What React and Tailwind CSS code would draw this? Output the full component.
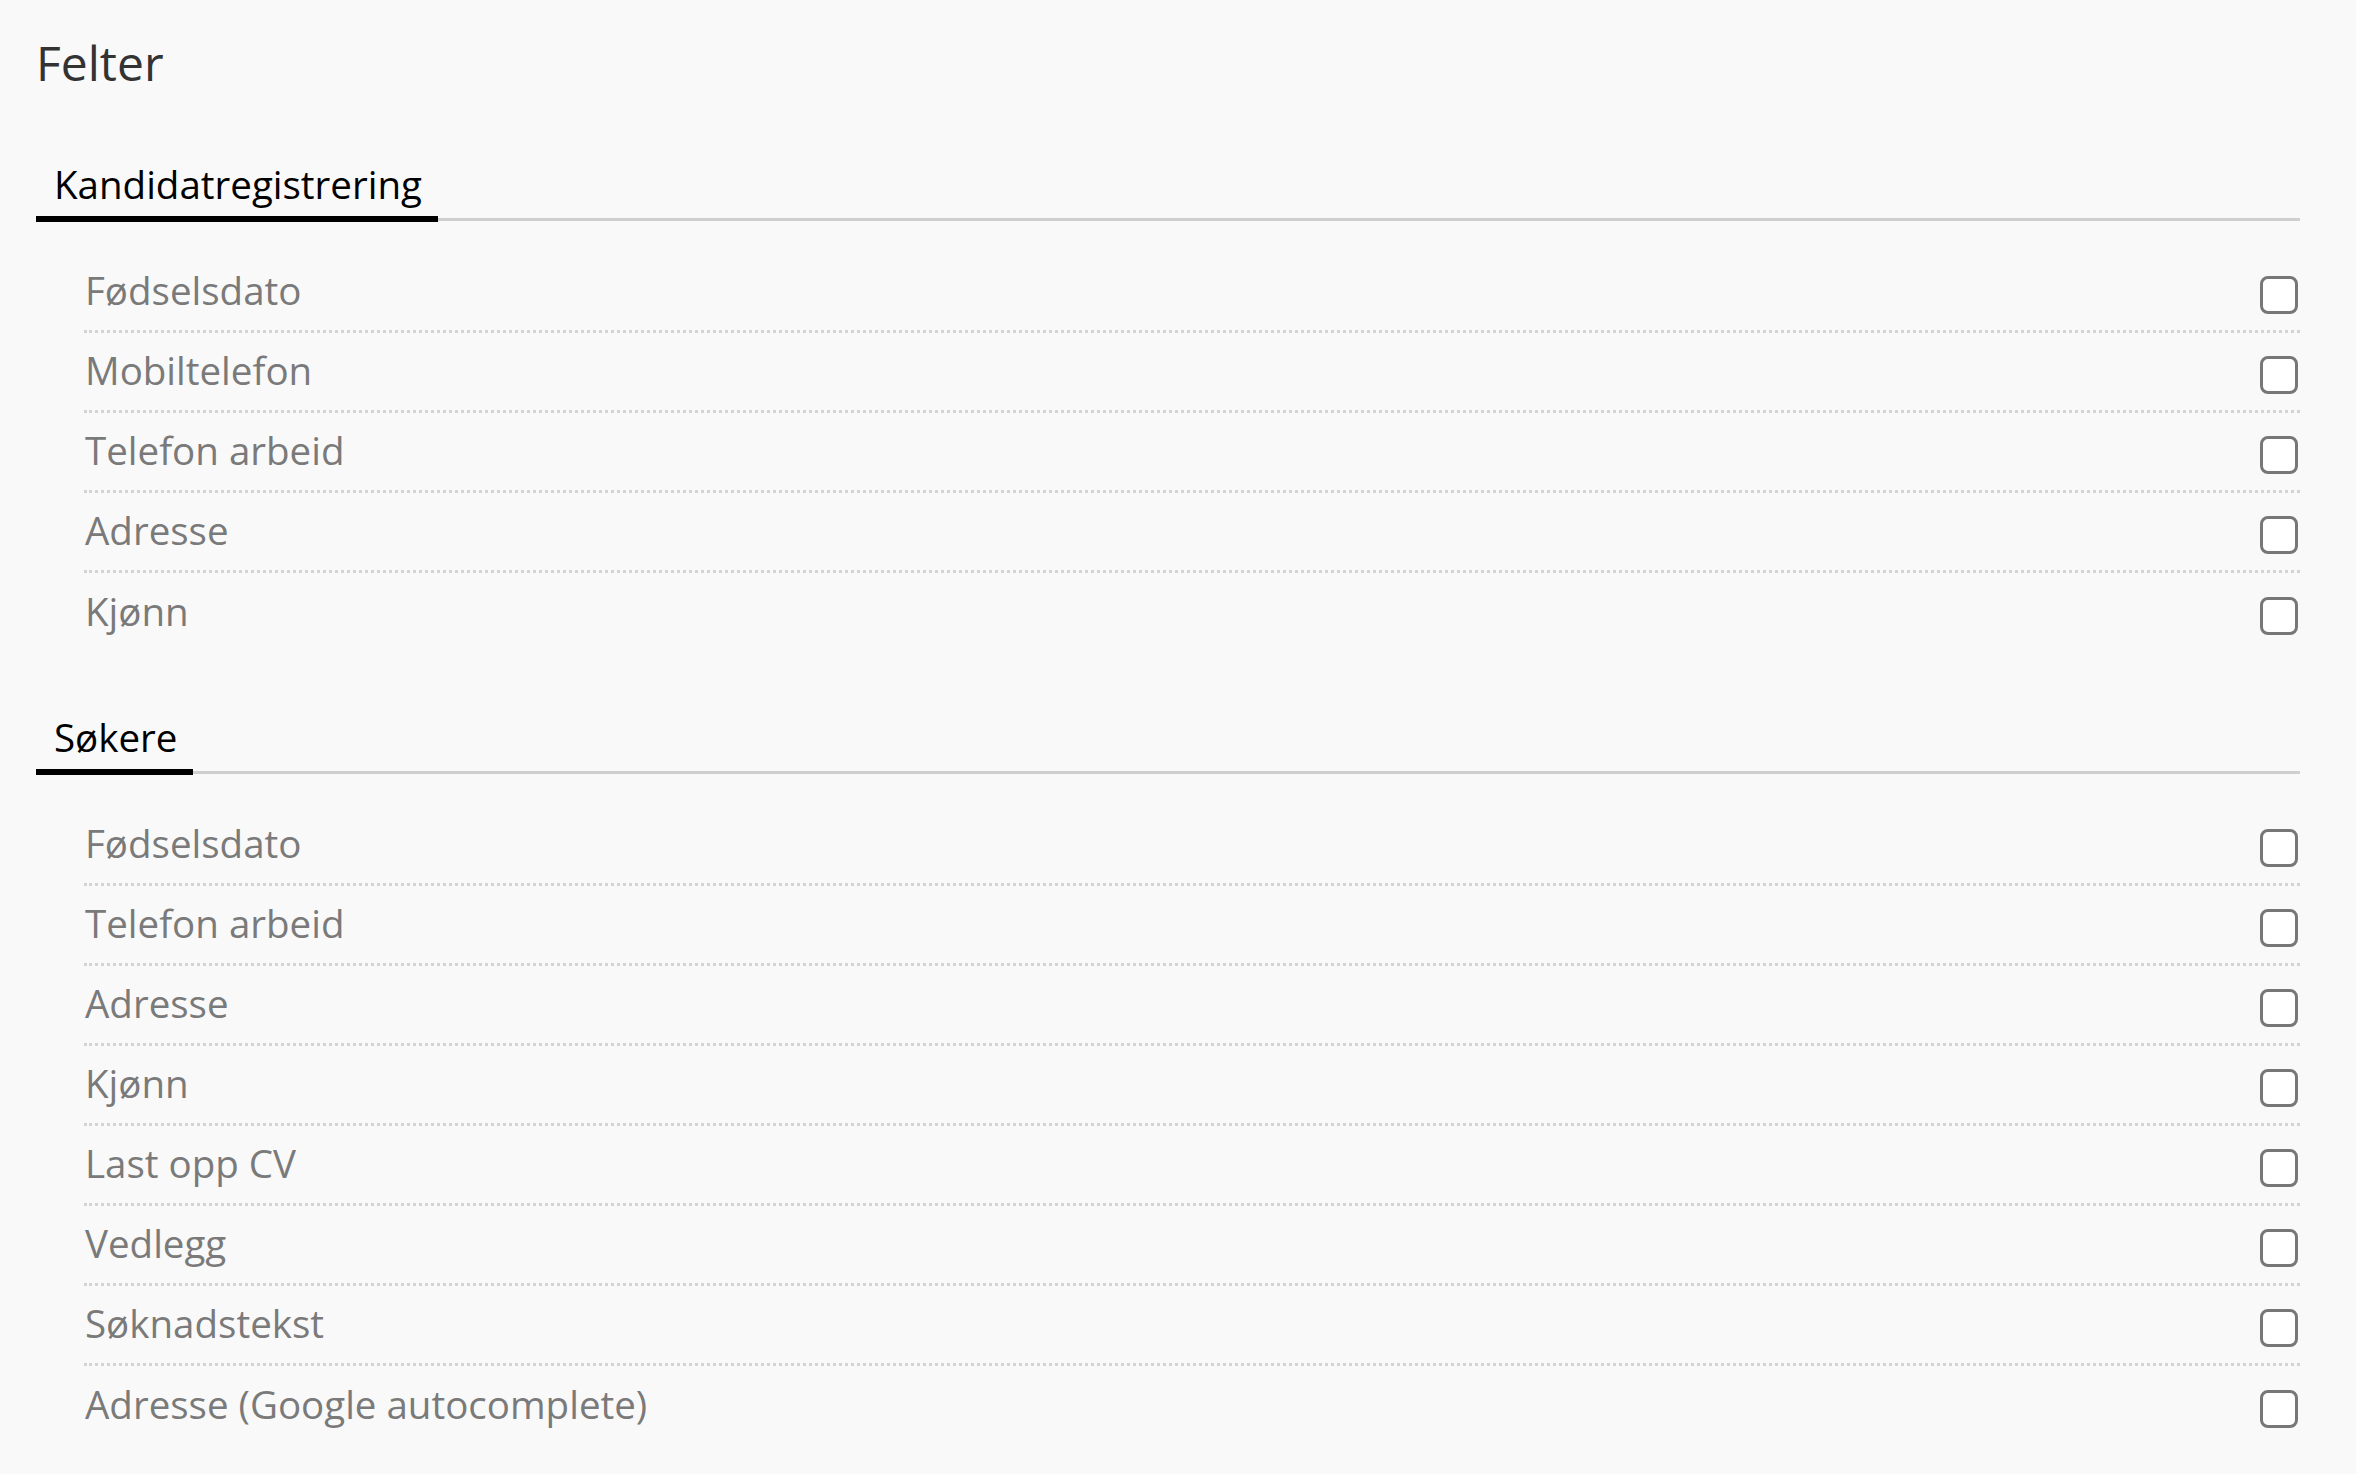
import React from "react";

const sections = [
    {
        title: "Kandidatregistrering",
        fields: ["Fødselsdato", "Mobiltelefon", "Telefon arbeid", "Adresse", "Kjønn"],
    },
    {
        title: "Søkere",
        fields: [
            "Fødselsdato",
            "Telefon arbeid",
            "Adresse",
            "Kjønn",
            "Last opp CV",
            "Vedlegg",
            "Søknadstekst",
            "Adresse (Google autocomplete)",
        ],
    },
];

function FieldRow({ label, last }) {
    return (
        <div
            className={
                "flex items-center justify-between h-[80px] " +
                (last ? "" : "border-b-[3px] border-dotted border-[#d4d4d4]")
            }
        >
            <span className="pl-[1px] mb-[4px] text-[38.5px] leading-[46px] text-[#7a7a7a]">{label}</span>
            <input type="checkbox" className="appearance-none w-[38px] h-[38px] mt-[6px] mr-[2px] border-[3px] border-[#777] rounded-[8px] bg-white" />
        </div>
    );
}

function Section({ title, fields }) {
    return (
        <div className="mb-[61px]">
            <div className="flex items-end">
                <div className="pl-[18px] pr-[16px] pb-[9px] border-b-[6px] border-black text-[38.5px] leading-[46px] text-black">
                    {title}
                </div>
                <div className="flex-1 border-b-[3px] border-[#cfcfcf] mb-[1px]" />
            </div>
            <div className="ml-[48px] mt-[31px]">
                {fields.map((f, i) => (
                    <FieldRow key={f + i} label={f} last={i === fields.length - 1} />
                ))}
            </div>
        </div>
    );
}

export default function App() {
    return (
        <div className="min-h-screen bg-[#f9f9f9] pl-[36px] pr-[56px] pt-[34px] font-['Open_Sans',sans-serif]">
            <h1 className="text-[48px] leading-[58px] text-[#333] mb-[69px]">Felter</h1>
            {sections.map((s) => (
                <Section key={s.title} title={s.title} fields={s.fields} />
            ))}
        </div>
    );
}
